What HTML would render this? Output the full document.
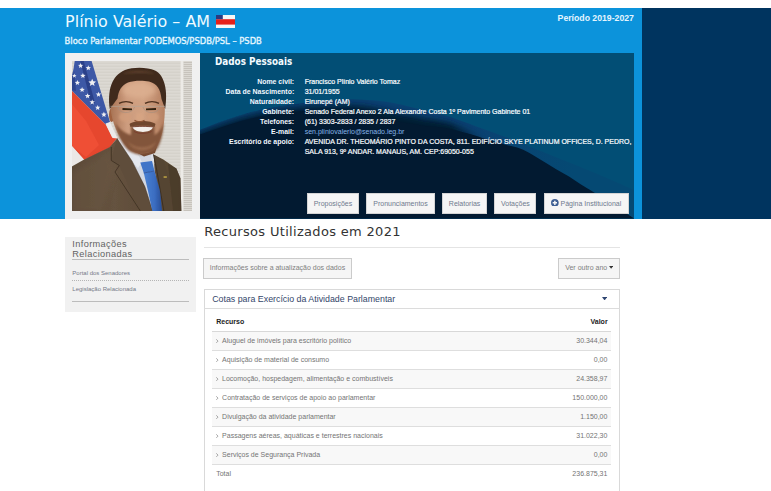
<!DOCTYPE html>
<html lang="pt-br"><head><meta charset="utf-8"><title>Plínio Valério - Senado Federal</title>
<style>
html,body{margin:0;padding:0;background:#fff;}
body{width:771px;height:491px;overflow:hidden;position:relative;font-family:"Liberation Sans",Arial,sans-serif;font-size:7px;color:#333;}
.abs,body>div,body>span,body>svg{position:absolute;}
.band{left:0;top:8px;width:642px;height:210.5px;background:#0c93db;}
.navy{left:642px;top:8px;width:129px;height:210.5px;background:#00345f;}
h1{position:absolute;margin:0;left:65.1px;top:11.5px;font-family:"DejaVu Sans","Liberation Sans",sans-serif;font-weight:normal;font-size:15.95px;line-height:19px;color:#eefaff;white-space:nowrap;}
.sub{left:64.6px;top:36.2px;font-family:"DejaVu Sans","Liberation Sans",sans-serif;font-size:8.4px;line-height:11px;color:#e6f7ff;white-space:nowrap;-webkit-text-stroke:0.32px #e6f7ff;}
.per{left:557.6px;top:12.5px;font-weight:bold;font-size:8.7px;line-height:11px;color:#e4f5ff;white-space:nowrap;}
.flag{left:215.5px;top:14.5px;}
.thumb{left:65px;top:53px;width:135px;height:165.5px;background:#f0f0f0;}
.photo{position:absolute;left:72.3px;top:61px;}
.panel{left:200px;top:53px;width:434px;height:165.5px;background:#024e75;overflow:hidden;}
.panel svg{position:absolute;left:0;top:0;}
.dp{left:215px;top:54.9px;font-family:"DejaVu Sans Condensed","DejaVu Sans",sans-serif;font-weight:bold;font-size:9.8px;line-height:13px;color:#f4fbff;white-space:nowrap;}
.dl{left:204px;width:90.2px;text-align:right;font-weight:bold;font-size:6.95px;line-height:10px;color:#f2f8ff;white-space:nowrap;}
.dv{left:304.7px;font-size:7px;line-height:10px;color:#fbfdff;white-space:nowrap;-webkit-text-stroke:0.2px #fbfdff;}
.dv.mail{color:#86b3e6;-webkit-text-stroke:0;}
.btn{box-sizing:border-box;background:#f5f5f5;border:0.6px solid #d4d4d4;color:#6f7a8e;font-size:7px;line-height:20px;text-align:center;height:20.8px;top:192.9px;white-space:nowrap;}
.h2{left:204.2px;top:222.9px;font-family:"DejaVu Sans","Liberation Sans",sans-serif;font-size:13px;line-height:17px;letter-spacing:0.32px;color:#333;white-space:nowrap;}
.hr{left:204px;top:247px;width:416px;height:0.8px;background:#e4e4e4;}
.gbtn{box-sizing:border-box;background:#f5f5f5;border:0.7px solid #cbcbcb;color:#808080;font-size:7px;line-height:18.6px;height:20.5px;top:258.1px;white-space:nowrap;}
.pnl{box-sizing:border-box;left:204.2px;top:289.2px;width:415.8px;height:220px;border:0.7px solid #d9d9d9;background:#fff;}
.pnlh{left:204.2px;top:308.2px;width:415.8px;height:0.7px;background:#dcdcdc;}
.pt{left:212.2px;top:294px;font-size:8.83px;line-height:11px;color:#33466a;white-space:nowrap;}
.th{left:212px;width:399px;top:312px;height:19px;}
.th span{position:absolute;top:5.4px;font-weight:bold;font-size:7px;line-height:10px;color:#222;}
.tr{left:212px;width:399px;height:19.03px;border-top:0.7px solid #dedede;box-sizing:border-box;color:#747474;font-size:7px;}
.tr.first{border-top:1.2px solid #d8d8d8;}
.tr.odd{background:#f8f8f8;}
.tr span.c1{position:absolute;left:4.2px;top:4.3px;line-height:10px;white-space:nowrap;}
.tr span.c2{position:absolute;right:3.6px;top:4.3px;line-height:10px;white-space:nowrap;}
.chev{display:inline-block;margin-right:3.5px;position:relative;top:-0.3px;}
.side{left:65px;top:237px;width:130.5px;height:74.6px;background:#f1f1f1;}
.st{left:72.3px;font-size:9.2px;line-height:9.6px;white-space:nowrap;letter-spacing:0.38px;color:#626262;}
.sl{left:72.3px;width:116.8px;height:0.8px;background:#bcbcbc;}
.sdot{left:72.3px;width:117px;top:280.1px;height:0;border-top:0.8px dotted #b5b5b5;}
.sa{left:72.3px;font-size:6px;line-height:8px;color:#747a88;white-space:nowrap;}
</style></head><body>
<div class="band"></div><div class="navy"></div>
<h1>Plínio Valério – AM</h1>
<svg class="flag" width="19.2" height="13.2" viewBox="0 0 19.2 13.2"><rect width="19.2" height="13.2" fill="#f6f6f6"/><rect y="4.2" width="19.2" height="5.4" fill="#e5201a"/><rect width="6.8" height="4.2" fill="#2a3a82"/></svg>
<div class="sub">Bloco Parlamentar PODEMOS/PSDB/PSL – PSDB</div>
<div class="per">Período 2019-2027</div>
<div class="thumb"></div>
<svg class="photo" viewBox="0 0 120 150" width="120" height="150" preserveAspectRatio="none">
<defs>
<filter id="bl" x="-5%" y="-5%" width="110%" height="110%"><feGaussianBlur stdDeviation="0.7"/></filter>
<filter id="b1" x="-20%" y="-20%" width="140%" height="140%"><feGaussianBlur stdDeviation="1.2"/></filter>
<filter id="b2" x="-30%" y="-30%" width="160%" height="160%"><feGaussianBlur stdDeviation="2.4"/></filter>
<pattern id="blinds2" width="4" height="2" patternUnits="userSpaceOnUse"><rect width="4" height="2" fill="#dcd9d3"/><rect y="1.2" width="4" height="0.8" fill="#c2beb6"/></pattern><pattern id="blinds" width="4" height="1.5" patternUnits="userSpaceOnUse"><rect width="4" height="1.5" fill="#dedbd5"/><rect y="0.95" width="4" height="0.55" fill="#d0ccc5"/></pattern>
<linearGradient id="skin" x1="0" x2="1" y1="0" y2="0"><stop offset="0" stop-color="#a87354"/><stop offset="0.3" stop-color="#cd9c7e"/><stop offset="0.6" stop-color="#d2a283"/><stop offset="1" stop-color="#b58061"/></linearGradient>
<linearGradient id="suit" x1="0" x2="1" y1="0" y2="0"><stop offset="0" stop-color="#5b4a38"/><stop offset="0.4" stop-color="#65523f"/><stop offset="1" stop-color="#55442f"/></linearGradient>
<linearGradient id="tie" x1="0" x2="1" y1="0" y2="0"><stop offset="0" stop-color="#4a82d4"/><stop offset="0.6" stop-color="#3a6cc0"/><stop offset="1" stop-color="#274c94"/></linearGradient>
<clipPath id="pc"><rect width="120" height="150"/></clipPath>
</defs>
<g clip-path="url(#pc)">
<rect width="120" height="150" fill="url(#blinds)"/>
<rect x="108.6" y="0" width="3" height="150" fill="#edebe7"/>
<rect x="111.6" y="0" width="8.4" height="150" fill="url(#blinds2)"/>
<g filter="url(#bl)">
<!-- flag -->
<polygon points="3,-2 19,-2 38,61 34,64 -1,29 -1,18 1.5,8" fill="#3e59a6"/>
<polygon points="8,-1 11.5,-1 23,42 19.5,44" fill="#2c4189"/>
<polygon points="0,16 2.2,10 4,30 0,29" fill="#2f458d"/>
<polygon points="8.6,2.0 9.3,3.7 11.2,3.9 9.8,5.1 10.2,6.9 8.6,5.9 7.0,6.9 7.4,5.1 6.0,3.9 7.9,3.7" fill="#eeeef2"/><polygon points="16.3,4.3 17.0,6.0 18.9,6.2 17.5,7.4 17.9,9.2 16.3,8.2 14.7,9.2 15.1,7.4 13.7,6.2 15.6,6.0" fill="#eeeef2"/><polygon points="10.9,12.0 11.6,13.8 13.6,13.9 12.1,15.2 12.5,17.1 10.9,16.1 9.3,17.1 9.7,15.2 8.2,13.9 10.2,13.8" fill="#eeeef2"/><polygon points="20.2,17.8 21.3,20.3 24.0,20.6 21.9,22.4 22.6,25.0 20.2,23.6 17.8,25.0 18.5,22.4 16.4,20.6 19.1,20.3" fill="#eeeef2"/><polygon points="5.4,19.1 6.1,20.8 8.0,21.0 6.6,22.2 7.0,24.0 5.4,23.0 3.8,24.0 4.2,22.2 2.8,21.0 4.7,20.8" fill="#eeeef2"/><polygon points="10.1,26.0 10.8,27.8 12.8,27.9 11.3,29.2 11.7,31.1 10.1,30.1 8.5,31.1 8.9,29.2 7.4,27.9 9.4,27.8" fill="#eeeef2"/><polygon points="15.6,32.2 16.3,34.0 18.3,34.1 16.8,35.4 17.2,37.3 15.6,36.3 14.0,37.3 14.4,35.4 12.9,34.1 14.9,34.0" fill="#eeeef2"/><polygon points="26.5,30.7 27.2,32.5 29.2,32.6 27.7,33.9 28.1,35.8 26.5,34.8 24.9,35.8 25.3,33.9 23.8,32.6 25.8,32.5" fill="#eeeef2"/><polygon points="20.2,38.4 20.9,40.2 22.9,40.3 21.4,41.6 21.8,43.5 20.2,42.5 18.6,43.5 19.0,41.6 17.5,40.3 19.5,40.2" fill="#eeeef2"/><polygon points="25.7,43.9 26.4,45.7 28.4,45.8 26.9,47.1 27.3,49.0 25.7,48.0 24.1,49.0 24.5,47.1 23.0,45.8 25.0,45.7" fill="#eeeef2"/><polygon points="31.9,50.8 32.7,52.6 34.7,52.8 33.1,54.1 33.6,56.0 31.9,55.0 30.2,56.0 30.7,54.1 29.1,52.8 31.1,52.6" fill="#eeeef2"/><polygon points="2.3,12.5 2.9,14.0 4.5,14.1 3.3,15.1 3.7,16.7 2.3,15.8 0.9,16.7 1.3,15.1 0.1,14.1 1.7,14.0" fill="#eeeef2"/>
<polygon points="-1,29 34,64 40,76 45,77 37.5,87 12.2,99 -1,84" fill="#e6462f"/>
<polygon points="-1,42 14,60 27,84 14,96 -1,84" fill="#ef5035"/>
<polygon points="33.5,62.5 38,61 45.5,77.5 40.5,77" fill="#ecebea"/>
<polygon points="-1,84 12.2,98.8 -1,106" fill="#ebe8e6"/>
<!-- suit -->
<path d="M-1,106 L12.2,98.5 L37.5,86.3 L45,77.5 L60,84 L81.5,93.5 L91.3,98.5 L104.4,107.5 L108.4,117.3 L109.4,151 L-1,151 Z" fill="url(#suit)"/>
<path d="M96,103 L104.4,107.5 L108.4,117.3 L109.4,151 L101,151 Z" fill="#473829" opacity="0.65"/>
<path d="M0,112 C12,104 28,96 38,90 L42,110 L30,151 L0,151 Z" fill="#6b5743" opacity="0.5" filter="url(#b2)"/>
<!-- shirt -->
<path d="M45.5,78 L62,82 L81.5,92 L82.5,108 L86,132 L80,151 L72,124 L59,100 Z" fill="#d3d8e2"/>
<path d="M45.5,78 L52,79 L63,88 L70,101 L66,107 L55,95 Z" fill="#e4e7ee"/><path d="M79,93 L81.5,93.5 L82.3,103 L79.5,100.5 Z" fill="#dde1e9"/>
<!-- lapels -->
<path d="M45,77.5 L60,100 L73,126 L81,151 L69,151 L47.3,104.5 L39.3,99.5 Z" fill="#5f4d3a"/>
<path d="M39.3,86 L39.3,99.5 L47.3,104.5 L43,111 L69,151" fill="none" stroke="#3d2f21" stroke-width="0.9" opacity="0.9"/>
<path d="M45,77.5 L60,100 L73,126 L81,151" fill="none" stroke="#46372a" stroke-width="0.7" opacity="0.7"/>
<path d="M81.5,93.5 L84.5,108 L92,151 L101,151 L97.5,120 L92,100 Z" fill="#554431"/>
<path d="M81.5,93.5 L84.5,108 L92,151" fill="none" stroke="#3a2c1f" stroke-width="0.9"/>
<!-- tie -->
<path d="M68.3,101.5 L80,100 L82.5,110 L71.8,112 Z" fill="#3f74c8"/>
<path d="M71.8,112 L82.5,110 L88,130 L90.2,151 L80.5,151 L76,130 Z" fill="url(#tie)"/>
<path d="M71.8,112 L82.5,110" stroke="#2a4f98" stroke-width="0.8"/>
<rect x="91.6" y="115.2" width="3.2" height="1.7" fill="#b39a42"/>
<!-- neck shadow under beard -->
<path d="M56,80 L86,82 L83,92 L72,95.5 L62,90 Z" fill="#70462e"/>
<!-- ear -->
<ellipse cx="39.6" cy="54" rx="2.6" ry="7" fill="#a06240"/>
<!-- face -->
<path d="M38.6,46 C38,30 44,13 66,12 C88,12 94,30 92.8,46 C93,60 91,75 85,85 C79,94.5 62,95 55,86 C47,76 39.2,62 38.6,46 Z" fill="url(#skin)"/>
<ellipse cx="67" cy="29" rx="17" ry="8" fill="#ddb091" opacity="0.85" filter="url(#b2)"/>
<ellipse cx="53" cy="56" rx="6" ry="4.5" fill="#d29e7c" opacity="0.8" filter="url(#b1)"/>
<ellipse cx="81" cy="56" rx="6" ry="4.5" fill="#d29e7c" opacity="0.8" filter="url(#b1)"/>
<ellipse cx="67.5" cy="56" rx="3.6" ry="4.6" fill="#d8a583" opacity="0.85" filter="url(#b1)"/>
<!-- beard -->
<path d="M43,61 C45,73 49.5,82 55,88 C62,95.5 79,95.5 85.5,87 C89.5,80 91.2,71 91.8,61 C89.5,68 86,72.5 82.5,74 L82.5,65 C77,61 64,61 59,65 L59,74 C53,72.5 46.5,68 43,61 Z" fill="#82553a" filter="url(#b1)"/>
<path d="M56,80 C62,88 78,88 84,80 C82,92 60,93 56,80 Z" fill="#9c6c4d" opacity="0.9" filter="url(#b1)"/>
<path d="M57.5,63 C62,59 79,59 83.5,63 L82.5,66 C77,63.2 64,63.2 58.5,66 Z" fill="#70462e" filter="url(#bl)"/>
<!-- teeth -->
<path d="M60.5,66 C65,65.2 76,65.2 81,66 C79,72.5 63,72.5 60.5,66 Z" fill="#f4f0ec"/>
<path d="M60.5,66 C65,65.2 76,65.2 81,66" fill="none" stroke="#6a3224" stroke-width="0.7"/>
<path d="M62,70.5 C66,73 75,73 79.5,70.5" fill="none" stroke="#7a3d2c" stroke-width="0.9"/>
<!-- hair -->
<path d="M37.8,48 C35.5,30 39,15 53,9 C61,5.8 75,5.8 83,9.5 C93,14.5 96,30 93.2,48 L89.5,38 C88.5,28 85,22.5 77,20.5 C71,19.3 62,19.3 56,21.5 C49,24.5 46.5,30 45.5,37.5 Z" fill="#402b1e"/>
<path d="M50,13 C58,8.5 76,8.5 84,13 C78,11.5 58,11.5 50,13 Z" fill="#6a4630" opacity="0.7" filter="url(#b1)"/>
<!-- brows / eyes -->
<path d="M47,42.3 C51,40.3 57,40.3 61,42.3" fill="none" stroke="#4d301f" stroke-width="1.4"/>
<path d="M73,42.3 C77,40.3 83,40.3 87,42.3" fill="none" stroke="#4d301f" stroke-width="1.4"/>
<path d="M50.5,48 L60,48.4 M74,48.4 L84,48" stroke="#33200f" stroke-width="1.9"/>
<!-- glasses -->
<path d="M38.5,45.3 L93,45.3" stroke="#b5a596" stroke-width="0.7"/>
<path d="M46,45.5 C46,53.5 61,53.5 62.5,46 M71,46 C72.5,53.5 87.5,53.5 87.5,45.5" fill="none" stroke="#a08e7e" stroke-width="0.55"/>
<!-- nose -->
<path d="M62.5,59.2 C65,61.2 70,61.2 72.5,59.2" fill="none" stroke="#8c5434" stroke-width="1.1"/>
</g>
</g>
</svg>
<div class="panel"><svg width="434" height="165.5" viewBox="0 0 434 165.5"><defs><filter id="pb" x="-5%" y="-10%" width="110%" height="120%"><feGaussianBlur stdDeviation="3"/></filter><linearGradient id="ag" x1="0" x2="434" y1="0" y2="0" gradientUnits="userSpaceOnUse"><stop offset="0.62" stop-color="#0a4172"/><stop offset="0.86" stop-color="#054973"/></linearGradient><clipPath id="cA"><path d="M0.0,76.8 C3.7,75.4 14.6,71.0 22.4,68.3 C30.2,65.5 37.7,62.8 47.0,60.3 C56.3,57.8 69.9,55.2 78.0,53.6 C86.1,52.0 89.1,51.8 95.8,50.9 C102.5,50.0 108.9,49.1 118.0,48.3 C127.1,47.5 141.6,46.4 150.6,46.2 C159.6,46.0 166.4,46.9 172.0,47.3 C177.6,47.7 180.1,48.0 184.4,48.6 C188.7,49.2 193.2,50.0 198.0,51.0 C202.8,52.0 208.5,53.4 213.0,54.5 C217.5,55.6 219.5,56.3 225.0,57.6 C230.5,58.9 239.7,60.7 246.0,62.5 C252.3,64.3 255.8,65.9 263.0,68.5 C270.2,71.1 279.5,74.5 289.0,78.0 C298.5,81.5 311.8,86.3 320.0,89.5 C328.2,92.7 330.8,94.1 338.0,97.0 C345.2,99.9 354.5,103.6 363.0,107.0 C371.5,110.4 382.1,114.7 389.0,117.5 C395.9,120.3 397.0,120.8 404.5,124.0 C412.0,127.2 429.1,134.8 434.0,137.0 L434,165.5 L0,165.5 Z"/></clipPath><linearGradient id="mg" x1="0" x2="434" y1="0" y2="0" gradientUnits="userSpaceOnUse"><stop offset="0.58" stop-color="#fff"/><stop offset="0.66" stop-color="#000"/></linearGradient><linearGradient id="mg2" x1="0" x2="434" y1="0" y2="0" gradientUnits="userSpaceOnUse"><stop offset="0.58" stop-color="#000"/><stop offset="0.66" stop-color="#fff"/></linearGradient><mask id="mL"><rect width="434" height="165.5" fill="url(#mg)"/></mask><mask id="mR"><rect width="434" height="165.5" fill="url(#mg2)"/></mask></defs><path d="M0.0,76.8 C3.7,75.4 14.6,71.0 22.4,68.3 C30.2,65.5 37.7,62.8 47.0,60.3 C56.3,57.8 69.9,55.2 78.0,53.6 C86.1,52.0 89.1,51.8 95.8,50.9 C102.5,50.0 108.9,49.1 118.0,48.3 C127.1,47.5 141.6,46.4 150.6,46.2 C159.6,46.0 166.4,46.9 172.0,47.3 C177.6,47.7 180.1,48.0 184.4,48.6 C188.7,49.2 193.2,50.0 198.0,51.0 C202.8,52.0 208.5,53.4 213.0,54.5 C217.5,55.6 219.5,56.3 225.0,57.6 C230.5,58.9 239.7,60.7 246.0,62.5 C252.3,64.3 255.8,65.9 263.0,68.5 C270.2,71.1 279.5,74.5 289.0,78.0 C298.5,81.5 311.8,86.3 320.0,89.5 C328.2,92.7 330.8,94.1 338.0,97.0 C345.2,99.9 354.5,103.6 363.0,107.0 C371.5,110.4 382.1,114.7 389.0,117.5 C395.9,120.3 397.0,120.8 404.5,124.0 C412.0,127.2 429.1,134.8 434.0,137.0 L434,165.5 L0,165.5 Z" fill="url(#ag)"/><g mask="url(#mL)" clip-path="url(#cA)"><path d="M-14.0,85.0 C-11.7,84.0 -6.1,81.5 0.0,79.2 C6.1,76.9 14.6,73.8 22.4,71.2 C30.2,68.6 37.7,65.8 47.0,63.4 C56.3,61.0 69.9,58.5 78.0,57.0 C86.1,55.5 89.1,55.4 95.8,54.7 C102.5,54.0 109.0,53.4 118.0,53.0 C127.0,52.6 141.0,52.0 150.0,52.2 C159.0,52.5 164.5,53.2 172.0,54.5 C179.5,55.8 188.2,58.4 195.0,59.8 C201.8,61.2 208.0,62.0 213.0,63.0 C218.0,64.0 219.5,64.5 225.0,65.5 C230.5,66.5 239.7,67.4 246.0,69.0 C252.3,70.6 258.2,73.1 263.0,75.0 C267.8,76.9 270.7,78.5 275.0,80.5 C279.3,82.5 284.0,85.5 289.0,87.3 C294.0,89.1 299.8,90.1 305.0,91.5 C310.2,92.9 315.5,93.8 320.0,95.5 C324.5,97.2 327.9,99.2 332.0,101.5 C336.1,103.8 340.3,106.5 344.4,109.0 C348.5,111.5 352.5,114.1 356.6,116.5 C360.7,118.9 364.9,121.1 369.0,123.6 C373.1,126.1 376.9,129.0 381.0,131.6 C385.1,134.2 388.1,135.8 393.3,139.0 C398.5,142.2 405.2,146.6 412.0,151.0 C418.8,155.4 430.3,163.1 434.0,165.5 L444,175.5 L-14,175.5 Z" fill="#021a31" filter="url(#pb)"/></g><path d="M0.0,81.5 C3.7,80.2 14.6,76.5 22.4,74.0 C30.2,71.5 37.7,68.8 47.0,66.5 C56.3,64.2 69.9,61.8 78.0,60.5 C86.1,59.2 89.1,59.0 95.8,58.5 C102.5,58.0 109.0,57.6 118.0,57.5 C127.0,57.4 141.0,57.4 150.0,58.0 C159.0,58.6 164.5,59.3 172.0,61.0 C179.5,62.7 188.2,66.3 195.0,68.0 C201.8,69.7 208.0,70.2 213.0,71.0 C218.0,71.8 219.5,72.3 225.0,73.0 C230.5,73.7 239.4,73.9 246.0,75.0 C252.6,76.1 259.6,78.2 264.4,79.5 C269.2,80.8 270.9,81.2 275.0,82.5 C279.1,83.8 284.0,85.8 289.0,87.3 C294.0,88.8 299.8,90.1 305.0,91.5 C310.2,92.9 315.5,93.8 320.0,95.5 C324.5,97.2 327.9,99.2 332.0,101.5 C336.1,103.8 340.3,106.5 344.4,109.0 C348.5,111.5 352.5,114.1 356.6,116.5 C360.7,118.9 364.9,121.1 369.0,123.6 C373.1,126.1 376.9,129.0 381.0,131.6 C385.1,134.2 388.1,135.8 393.3,139.0 C398.5,142.2 405.2,146.6 412.0,151.0 C418.8,155.4 430.3,163.1 434.0,165.5 L434,165.5 L0,165.5 Z" fill="#021a31"/></svg></div>
<div class="dp">Dados Pessoais</div>
<div class="dl" style="top:77.30px">Nome civil:</div><div class="dv " style="top:77.30px">Francisco Plínio Valério Tomaz</div>
<div class="dl" style="top:87.32px">Data de Nascimento:</div><div class="dv " style="top:87.32px">31/01/1955</div>
<div class="dl" style="top:97.34px">Naturalidade:</div><div class="dv " style="top:97.34px">Eirunepé (AM)</div>
<div class="dl" style="top:107.36px">Gabinete:</div><div class="dv " style="top:107.36px">Senado Federal Anexo 2 Ala Alexandre Costa 1º Pavimento Gabinete 01</div>
<div class="dl" style="top:117.38px">Telefones:</div><div class="dv " style="top:117.38px">(61) 3303-2833 / 2835 / 2837</div>
<div class="dl" style="top:127.40px">E-mail:</div><div class="dv mail" style="top:127.40px">sen.pliniovalerio@senado.leg.br</div>
<div class="dl" style="top:137.42px">Escritório de apoio:</div><div class="dv " style="top:137.42px">AVENIDA DR. THEOMÁRIO PINTO DA COSTA, 811. EDIFÍCIO SKYE PLATINUM OFFICES, D. PEDRO,</div>
<div class="dl" style="top:147.44px"></div><div class="dv " style="top:147.44px">SALA 913, 9º ANDAR. MANAUS, AM. CEP:69050-055</div>

<div class="btn" style="left:306.7px;width:52.5px">Proposições</div>
<div class="btn" style="left:366px;width:69px">Pronunciamentos</div>
<div class="btn" style="left:442px;width:45.2px">Relatorias</div>
<div class="btn" style="left:494.3px;width:42.2px">Votações</div>
<div class="btn" style="left:543.9px;width:85.2px"><svg style="position:relative;top:0.6px;margin-left:-0.8px;margin-right:2px" width="7.7" height="7.7" viewBox="0 0 10 10"><circle cx="5" cy="5" r="5" fill="#3d5e93"/><path d="M5,2.2V7.8M2.2,5H7.8" stroke="#f5f5f5" stroke-width="1.9"/></svg>Página Institucional</div>
<div class="h2">Recursos Utilizados em 2021</div>
<div class="hr"></div>
<div class="gbtn" style="left:203.2px;width:148.5px;text-align:center">Informações sobre a atualização dos dados</div>
<div class="gbtn" style="left:558.2px;width:61.8px;padding-left:6px">Ver outro ano <svg style="position:relative;top:-1.6px;left:-0.6px" width="4.3" height="2.7" viewBox="0 0 4.6 3"><path d="M0,0H4.6L2.3,3Z" fill="#333"/></svg></div>
<div class="pnl"></div><div class="pnlh"></div>
<div class="pt">Cotas para Exercício da Atividade Parlamentar</div>
<svg style="left:602px;top:297px" width="5.2" height="3.4" viewBox="0 0 5.2 3.4"><path d="M0,0H5.2L2.6,3.4Z" fill="#2f4672"/></svg>
<div class="th"><span style="left:4.2px">Recurso</span><span style="right:3.4px">Valor</span></div>
<div class="tr odd first" style="top:330.85px"><span class="c1"><svg class="chev" width="2.4" height="4.2" viewBox="0 0 2.4 4.2"><path d="M0.3,0.3L2,2.1L0.3,3.9" fill="none" stroke="#777" stroke-width="0.65"/></svg>Aluguel de imóveis para escritório político</span><span class="c2">30.344,04</span></div>
<div class="tr" style="top:349.88px"><span class="c1"><svg class="chev" width="2.4" height="4.2" viewBox="0 0 2.4 4.2"><path d="M0.3,0.3L2,2.1L0.3,3.9" fill="none" stroke="#777" stroke-width="0.65"/></svg>Aquisição de material de consumo</span><span class="c2">0,00</span></div>
<div class="tr odd" style="top:368.91px"><span class="c1"><svg class="chev" width="2.4" height="4.2" viewBox="0 0 2.4 4.2"><path d="M0.3,0.3L2,2.1L0.3,3.9" fill="none" stroke="#777" stroke-width="0.65"/></svg>Locomoção, hospedagem, alimentação e combustíveis</span><span class="c2">24.358,97</span></div>
<div class="tr" style="top:387.94px"><span class="c1"><svg class="chev" width="2.4" height="4.2" viewBox="0 0 2.4 4.2"><path d="M0.3,0.3L2,2.1L0.3,3.9" fill="none" stroke="#777" stroke-width="0.65"/></svg>Contratação de serviços de apoio ao parlamentar</span><span class="c2">150.000,00</span></div>
<div class="tr odd" style="top:406.97px"><span class="c1"><svg class="chev" width="2.4" height="4.2" viewBox="0 0 2.4 4.2"><path d="M0.3,0.3L2,2.1L0.3,3.9" fill="none" stroke="#777" stroke-width="0.65"/></svg>Divulgação da atividade parlamentar</span><span class="c2">1.150,00</span></div>
<div class="tr" style="top:426.00px"><span class="c1"><svg class="chev" width="2.4" height="4.2" viewBox="0 0 2.4 4.2"><path d="M0.3,0.3L2,2.1L0.3,3.9" fill="none" stroke="#777" stroke-width="0.65"/></svg>Passagens aéreas, aquáticas e terrestres nacionais</span><span class="c2">31.022,30</span></div>
<div class="tr odd" style="top:445.03px"><span class="c1"><svg class="chev" width="2.4" height="4.2" viewBox="0 0 2.4 4.2"><path d="M0.3,0.3L2,2.1L0.3,3.9" fill="none" stroke="#777" stroke-width="0.65"/></svg>Serviços de Segurança Privada</span><span class="c2">0,00</span></div>
<div class="tr" style="top:464.06px"><span class="c1">Total</span><span class="c2">236.875,31</span></div>

<div class="side"></div>
<div class="st" style="top:239.6px">Informações</div><div class="st" style="top:249.5px">Relacionadas</div>
<div class="sl" style="top:259.1px"></div>
<div class="sa" style="top:268.6px">Portal dos Senadores</div>
<div class="sdot"></div>
<div class="sa" style="top:284.6px">Legislação Relacionada</div>
<div class="sl" style="top:300.9px"></div>
</body></html>
